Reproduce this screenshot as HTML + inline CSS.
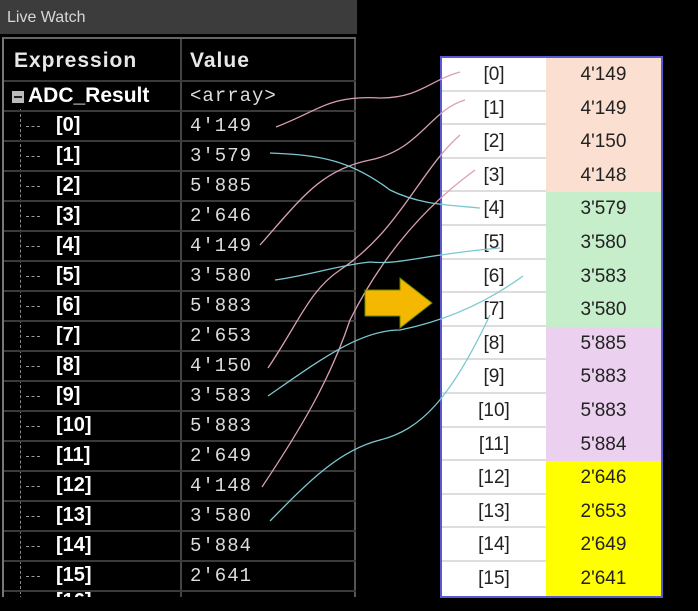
<!DOCTYPE html>
<html><head><style>
body{margin:0;width:698px;height:611px;background:#000;position:relative;overflow:hidden;font-family:"Liberation Sans",sans-serif}
.tb{position:absolute;left:0;top:0;width:357px;height:34px;background:#3c3c3c;color:#d8d8d8;font-size:16px;line-height:36px;padding-left:7px;box-sizing:border-box}
.panel{position:absolute;left:2px;top:37px;width:354px;height:560px;border-left:2px solid #777;border-top:2px solid #666;box-sizing:border-box;overflow:hidden}
.r{position:absolute;left:0;width:352px;height:30px;border-bottom:2px solid #3a3a3a;box-sizing:border-box}
.e{position:absolute;left:52px;top:2px;color:#fff;font-weight:bold;font-size:20px}
.v{position:absolute;left:186px;top:3px;color:#ddd;font-size:19px;font-family:"Liberation Mono",monospace;letter-spacing:1px}
.d{position:absolute;left:22px;top:14px;width:14px;border-top:1px dashed #999}
.rt{position:absolute;left:440px;top:56px;width:223px;height:542px;border:2px solid #5a5ad0;box-sizing:border-box;background:#fff;overflow:hidden}
.rr{position:absolute;left:0;width:219px;height:33.6px;font-size:19px;color:#222;line-height:33.6px}
.rr .a{position:absolute;left:0;width:104px;text-align:center;border-bottom:2px solid #ddd;height:33.6px;box-sizing:border-box}
.rr .b{position:absolute;left:104px;width:115px;text-align:center;height:33.6px}
</style></head><body>
<div class="tb">Live Watch</div>
<div class="panel">
<div style="position:absolute;left:176px;top:0;width:2px;height:560px;background:#444"></div>
<div style="position:absolute;left:350px;top:0;width:2px;height:560px;background:#555"></div>
<div style="position:absolute;left:16px;top:70px;height:490px;border-left:1px dashed #888"></div>
<div class="r" style="top:0;height:43px"><span class="e" style="left:10px;top:10px;color:#e8e8e8;font-size:21px;letter-spacing:1px">Expression</span><span class="e" style="left:186px;top:10px;color:#e8e8e8;font-size:21px;letter-spacing:1px">Value</span></div>
<div class="r" style="top:43px"><span style="position:absolute;left:8px;top:9px;width:12px;height:12px;background:#bbb"><span style="position:absolute;left:2px;top:5px;width:8px;height:2px;background:#222"></span></span><span class="e" style="left:24px;color:#fff;font-size:21px">ADC_Result</span><span class="v">&lt;array&gt;</span></div>
<div class="r" style="top:73px"><span class="d"></span><span class="e">[0]</span><span class="v">4'149</span></div>
<div class="r" style="top:103px"><span class="d"></span><span class="e">[1]</span><span class="v">3'579</span></div>
<div class="r" style="top:133px"><span class="d"></span><span class="e">[2]</span><span class="v">5'885</span></div>
<div class="r" style="top:163px"><span class="d"></span><span class="e">[3]</span><span class="v">2'646</span></div>
<div class="r" style="top:193px"><span class="d"></span><span class="e">[4]</span><span class="v">4'149</span></div>
<div class="r" style="top:223px"><span class="d"></span><span class="e">[5]</span><span class="v">3'580</span></div>
<div class="r" style="top:253px"><span class="d"></span><span class="e">[6]</span><span class="v">5'883</span></div>
<div class="r" style="top:283px"><span class="d"></span><span class="e">[7]</span><span class="v">2'653</span></div>
<div class="r" style="top:313px"><span class="d"></span><span class="e">[8]</span><span class="v">4'150</span></div>
<div class="r" style="top:343px"><span class="d"></span><span class="e">[9]</span><span class="v">3'583</span></div>
<div class="r" style="top:373px"><span class="d"></span><span class="e">[10]</span><span class="v">5'883</span></div>
<div class="r" style="top:403px"><span class="d"></span><span class="e">[11]</span><span class="v">2'649</span></div>
<div class="r" style="top:433px"><span class="d"></span><span class="e">[12]</span><span class="v">4'148</span></div>
<div class="r" style="top:463px"><span class="d"></span><span class="e">[13]</span><span class="v">3'580</span></div>
<div class="r" style="top:493px"><span class="d"></span><span class="e">[14]</span><span class="v">5'884</span></div>
<div class="r" style="top:523px"><span class="d"></span><span class="e">[15]</span><span class="v">2'641</span></div>
<div class="r" style="top:553px;border:none"><span class="e" style="top:-2px">[16]</span></div>
</div>
<div style="position:absolute;left:0;top:597px;width:698px;height:14px;background:#000"></div>
<div class="rt">
<div class="rr" style="top:0"><span class="a">[0]</span><span class="b" style="background:#fbdfd0">4'149</span></div>
<div class="rr" style="top:33.6px"><span class="a">[1]</span><span class="b" style="background:#fbdfd0">4'149</span></div>
<div class="rr" style="top:67.2px"><span class="a">[2]</span><span class="b" style="background:#fbdfd0">4'150</span></div>
<div class="rr" style="top:100.8px"><span class="a">[3]</span><span class="b" style="background:#fbdfd0">4'148</span></div>
<div class="rr" style="top:134.4px"><span class="a">[4]</span><span class="b" style="background:#c6eecb">3'579</span></div>
<div class="rr" style="top:168px"><span class="a">[5]</span><span class="b" style="background:#c6eecb">3'580</span></div>
<div class="rr" style="top:201.6px"><span class="a">[6]</span><span class="b" style="background:#c6eecb">3'583</span></div>
<div class="rr" style="top:235.2px"><span class="a">[7]</span><span class="b" style="background:#c6eecb">3'580</span></div>
<div class="rr" style="top:268.8px"><span class="a">[8]</span><span class="b" style="background:#ebd0ef">5'885</span></div>
<div class="rr" style="top:302.4px"><span class="a">[9]</span><span class="b" style="background:#ebd0ef">5'883</span></div>
<div class="rr" style="top:336px"><span class="a">[10]</span><span class="b" style="background:#ebd0ef">5'883</span></div>
<div class="rr" style="top:369.6px"><span class="a">[11]</span><span class="b" style="background:#ebd0ef">5'884</span></div>
<div class="rr" style="top:403.2px"><span class="a">[12]</span><span class="b" style="background:#ffff00">2'646</span></div>
<div class="rr" style="top:436.8px"><span class="a">[13]</span><span class="b" style="background:#ffff00">2'653</span></div>
<div class="rr" style="top:470.4px"><span class="a">[14]</span><span class="b" style="background:#ffff00">2'649</span></div>
<div class="rr" style="top:504px"><span class="a" style="border:none">[15]</span><span class="b" style="background:#ffff00">2'641</span></div>
</div>
<svg width="698" height="611" style="position:absolute;left:0;top:0" fill="none" stroke-width="1.3">
<g stroke="#d9a0b0">
<path d="M276 127 C320 110 330 95 380 98 C420 98 430 80 460 72"/>
<path d="M260 245 C300 200 320 170 370 160 C420 150 430 110 465 100"/>
<path d="M268 368 C300 320 310 290 340 270 C400 230 420 170 460 135"/>
<path d="M262 487 C300 430 330 380 350 320 C380 260 420 210 475 170"/>
</g>
<g stroke="#7cc8d0">
<path d="M270 153 C320 155 350 160 390 190 C420 205 450 205 480 208"/>
<path d="M275 280 C310 275 340 265 370 262 C400 265 420 255 500 248"/>
<path d="M268 396 C320 360 360 330 400 330 C450 320 490 300 523 276"/>
<path d="M270 521 C310 480 340 450 380 440 C420 430 450 400 490 315"/>
</g>
<polygon points="365,290 400,290 400,278 432,303 400,328 400,316 365,316" fill="#f5b800" stroke="#6a8a00" stroke-width="1"/>
</svg>
</body></html>
